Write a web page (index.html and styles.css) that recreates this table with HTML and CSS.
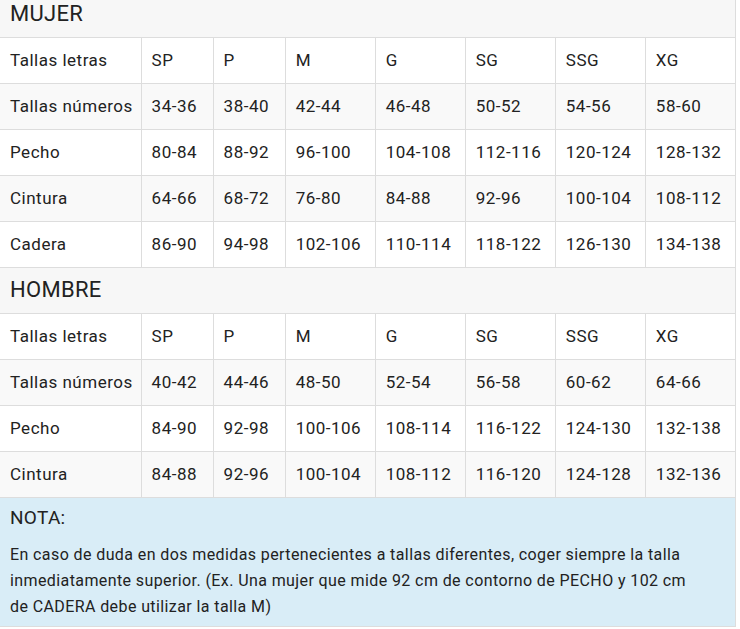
FILE: index.html
```html
<!DOCTYPE html>
<html lang="es">
<head>
<meta charset="utf-8">
<title>Tallas</title>
<link rel="stylesheet" href="styles.css">
</head>
<body>
<div class="sheet">
<table class="sizes">
  <colgroup>
    <col class="c-label"><col class="c-sm"><col class="c-sm"><col class="c-md"><col class="c-md"><col class="c-md"><col class="c-md"><col class="c-md">
  </colgroup>
  <tbody>
    <tr class="section"><th colspan="8">MUJER</th></tr>
    <tr><td>Tallas letras</td><td>SP</td><td>P</td><td>M</td><td>G</td><td>SG</td><td>SSG</td><td>XG</td></tr>
    <tr class="alt"><td>Tallas números</td><td>34-36</td><td>38-40</td><td>42-44</td><td>46-48</td><td>50-52</td><td>54-56</td><td>58-60</td></tr>
    <tr><td>Pecho</td><td>80-84</td><td>88-92</td><td>96-100</td><td>104-108</td><td>112-116</td><td>120-124</td><td>128-132</td></tr>
    <tr class="alt"><td>Cintura</td><td>64-66</td><td>68-72</td><td>76-80</td><td>84-88</td><td>92-96</td><td>100-104</td><td>108-112</td></tr>
    <tr><td>Cadera</td><td>86-90</td><td>94-98</td><td>102-106</td><td>110-114</td><td>118-122</td><td>126-130</td><td>134-138</td></tr>
    <tr class="section"><th colspan="8">HOMBRE</th></tr>
    <tr><td>Tallas letras</td><td>SP</td><td>P</td><td>M</td><td>G</td><td>SG</td><td>SSG</td><td>XG</td></tr>
    <tr class="alt"><td>Tallas números</td><td>40-42</td><td>44-46</td><td>48-50</td><td>52-54</td><td>56-58</td><td>60-62</td><td>64-66</td></tr>
    <tr><td>Pecho</td><td>84-90</td><td>92-98</td><td>100-106</td><td>108-114</td><td>116-122</td><td>124-130</td><td>132-138</td></tr>
    <tr class="alt"><td>Cintura</td><td>84-88</td><td>92-96</td><td>100-104</td><td>108-112</td><td>116-120</td><td>124-128</td><td>132-136</td></tr>
  </tbody>
</table>
<div class="note">
  <div class="note-title">NOTA:</div>
  <p class="note-text">En caso de duda en dos medidas pertenecientes a tallas diferentes, coger siempre la talla<br>inmediatamente superior. (Ex. Una mujer que mide 92 cm de contorno de PECHO y 102 cm<br>de CADERA debe utilizar la talla M)</p>
</div>
</div>
</body>
</html>
```
FILE: styles.css
```css
html, body {
  margin: 0;
  padding: 0;
  background: #fff;
}
body {
  font-family: Roboto, "Liberation Sans", sans-serif;
  color: #222;
}
.sheet {
  width: 736px;
  margin-top: -9px;
}
.sizes {
  width: 736px;
  border-collapse: collapse;
  table-layout: fixed;
}
.c-label { width: 141px; }
.c-sm { width: 72px; }
.c-md { width: 90px; }
.sizes td, .sizes th {
  height: 43px;
  padding: 0 10px 2px 10px;
  border: 1px solid #dddddd;
  font-size: 17px;
  letter-spacing: 0.5px;
  font-weight: 400;
  text-align: left;
  white-space: nowrap;
}
.sizes tr td:first-child, .sizes tr th:first-child {
  border-left: none;
}
.sizes .section th {
  background: #f7f7f7;
  font-size: 22px;
  letter-spacing: 0.3px;
}
.sizes tr.alt td {
  background: #f9f9f9;
}
.note {
  background: #d9edf7;
  border-right: 1px solid #dddddd;
  border-bottom: 1px solid #dddddd;
  padding: 8px 10px 8px 10px;
  height: 112px;
}
.note-title {
  font-size: 19px;
  line-height: 24px;
  letter-spacing: 0.3px;
}
.note-text {
  margin: 12px 0 0 0;
  font-size: 16px;
  line-height: 26px;
  letter-spacing: 0.4px;
  white-space: nowrap;
}
```
